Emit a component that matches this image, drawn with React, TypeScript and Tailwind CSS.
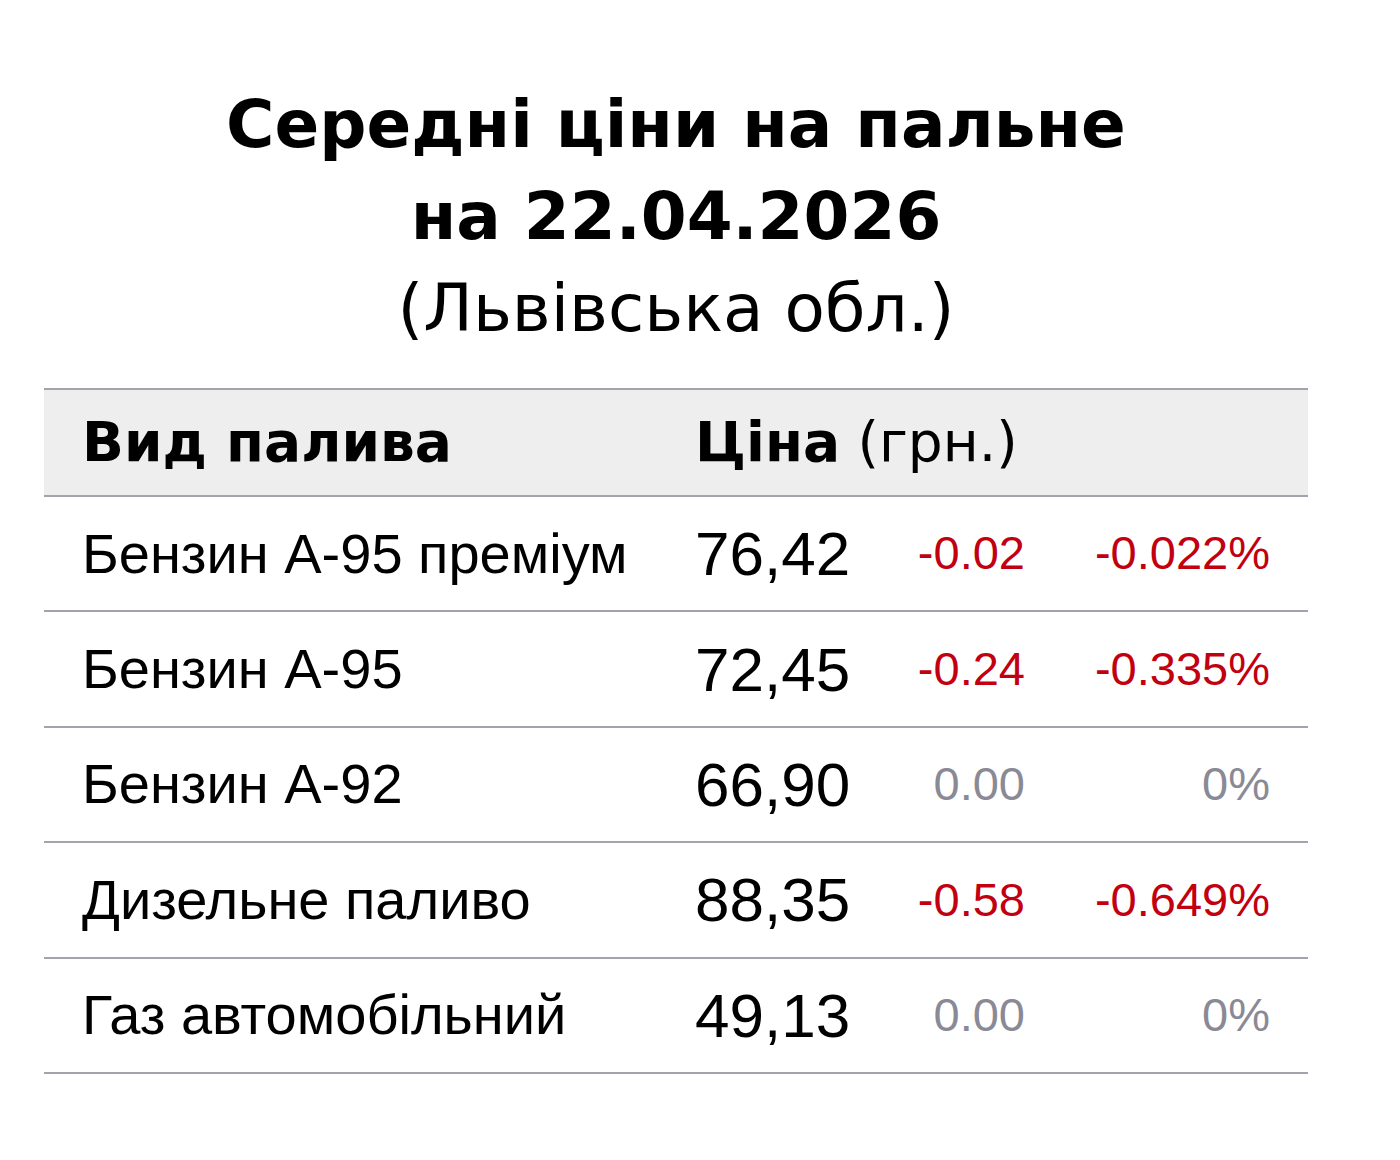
const rows = [
  { name: "Бензин А-95 преміум", price: "76,42", diff: "-0.02", pct: "-0.022%" },
  { name: "Бензин А-95", price: "72,45", diff: "-0.24", pct: "-0.335%" },
  { name: "Бензин А-92", price: "66,90", diff: "0.00", pct: "0%" },
  { name: "Дизельне паливо", price: "88,35", diff: "-0.58", pct: "-0.649%" },
  { name: "Газ автомобільний", price: "49,13", diff: "0.00", pct: "0%" },
];

export default function App() {
  return (
    <div className="min-h-screen bg-white text-black">
      <div className="w-[1264px] ml-[44px] pt-[79px]">
        <h1 className="text-center font-['DejaVu_Sans',Verdana,sans-serif] text-[66px] leading-[92px]">
          <span className="block font-bold">Середні ціни на пальне</span>
          <span className="block font-bold">на 22.04.2026</span>
          <span className="block font-normal">(Львівська обл.)</span>
        </h1>

        <table className="mt-[33px] w-full border-collapse">
          <thead>
            <tr className="bg-[#eeeeee] border-y-[2px] border-[#a3a3b0] h-[107px]">
              <th className="w-[651px] pl-[38px] text-left font-['DejaVu_Sans',Verdana,sans-serif] text-[55px] font-bold">
                Вид палива
              </th>
              <th
                colSpan={3}
                className="text-left font-['DejaVu_Sans',Verdana,sans-serif] text-[55px] font-normal"
              >
                <span className="font-bold">Ціна</span> (грн.)
              </th>
            </tr>
          </thead>
          <tbody className="font-['Liberation_Sans',Arial,sans-serif]">
            {rows.map((r) => {
              const zero = r.diff === "0.00";
              const tone = zero ? "text-[#8a8a96]" : "text-[#c20010]";
              return (
                <tr key={r.name} className="border-b-[2px] border-[#a3a3b0] h-[115.4px]">
                  <td className="pl-[38px] text-[56px]">{r.name}</td>
                  <td className="w-[180px] text-[62px]">{r.price}</td>
                  <td className={`w-[150px] text-right text-[47px] ${tone}`}>{r.diff}</td>
                  <td className={`pr-[38px] text-right text-[47px] ${tone}`}>{r.pct}</td>
                </tr>
              );
            })}
          </tbody>
        </table>
      </div>
    </div>
  );
}
